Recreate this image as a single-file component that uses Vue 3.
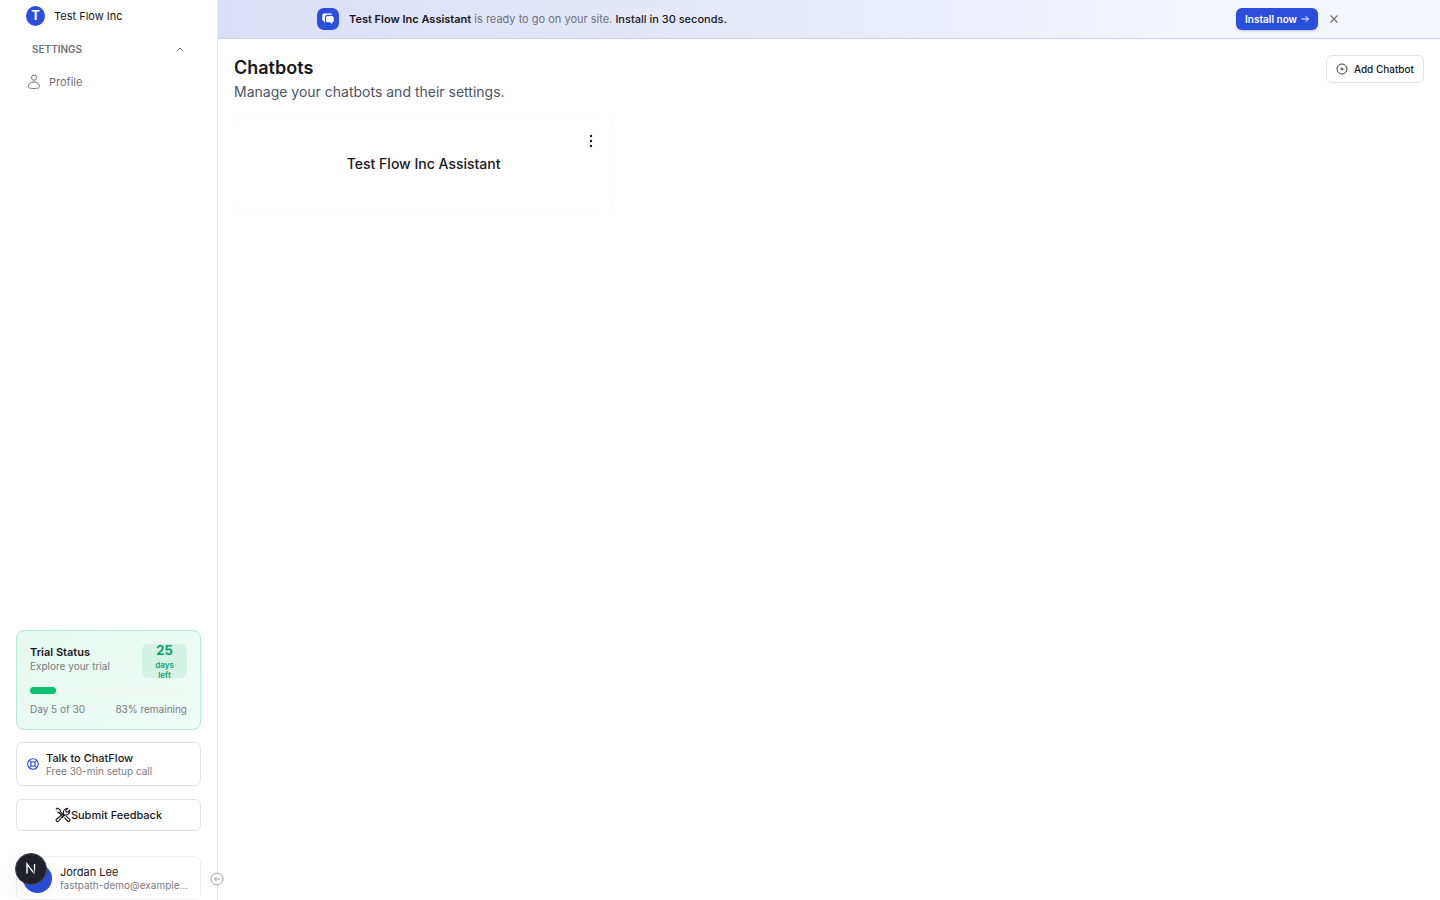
<template>
  <div class="layout">
    <aside class="sidebar">
      <a class="org" href="#">
        <span class="org-logo">T</span>
        <span>Test Flow Inc</span>
      </a>

      <button class="section-toggle" type="button" :aria-expanded="settingsOpen" @click="settingsOpen = !settingsOpen">
        <span>SETTINGS</span>
        <svg :class="{ closed: !settingsOpen }" width="8" height="8" viewBox="0 0 8 8" fill="none" stroke="currentColor">
          <path d="M1 6.300 4 3l3 3.300" />
        </svg>
      </button>

      <nav v-if="settingsOpen" class="nav">
        <a class="nav-link" href="#profile">
          <svg width="14" height="16" viewBox="0 0 14 16" fill="none" stroke="currentColor">
            <circle cx="7" cy="3.7" r="2.6" />
            <path d="M7 8c-3.2 0-5.5 2-5.5 4.4C1.500 13.900 2.900 14.500 7 14.500s5.500-.6 5.500-2.100C12.500 10 10.200 8 7 8z" />
          </svg>
          <span>Profile</span>
        </a>
      </nav>

      <div class="sidebar-bottom">
        <section class="trial">
          <div class="trial-head">
            <div>
              <div class="trial-title">Trial Status</div>
              <div class="muted">Explore your trial</div>
            </div>
            <div class="days">
              <strong>{{ daysLeft }}</strong>
              <span>days left</span>
            </div>
          </div>
          <div class="track">
            <div class="bar" :style="{ width: `${(trial.day / trial.total) * 100}%` }"></div>
          </div>
          <div class="trial-foot muted">
            <span>Day {{ trial.day }} of {{ trial.total }}</span>
            <span>{{ remaining }}% remaining</span>
          </div>
        </section>

        <a class="talk" href="#call">
          <svg width="12" height="12" viewBox="0 0 12 12" fill="none" stroke="currentColor" stroke-width="1.100">
            <circle cx="6" cy="6" r="5.300" />
            <circle cx="6" cy="6" r="2.200" />
            <path d="m2.300 2.300 2.100 2.100M9.700 2.300 7.600 4.400M2.300 9.700l2.100-2.100M9.700 9.700 7.600 7.600" />
          </svg>
          <span class="lines">
            <span class="talk-title">Talk to ChatFlow</span>
            <span class="muted">Free 30-min setup call</span>
          </span>
        </a>

        <button class="feedback" type="button">
          <svg width="16" height="16" viewBox="0 0 16 16" fill="none" stroke="currentColor" stroke-width="1.100" stroke-linejoin="round" stroke-linecap="round">
            <path d="M1.200 2.200 2.300 1.100l2.700 1.600.4 1.900 2.200 2.200M6.400 7.800 4.300 5.700l-1.600-.6z" />
            <path d="m9.700 10.800 3 3.200c.5.500 1.300.5 1.800 0s.5-1.300 0-1.800l-3.300-3.100" />
            <path d="M9 7.400 3.700 14c-.6.700-1.600.8-2.200.2s-.5-1.600.2-2.200L8.500 6.300C8 3.500 9.600 1.300 12.800 1.300l-2.100 2.100c.1 1 .9 1.800 1.900 1.900l2.100-2.100c.2 3-1.700 5.200-4.400 4.800C9.800 8 9.300 8.200 9 8.600L7.300 10.700" />
          </svg>
          <span>Submit Feedback</span>
        </button>

        <button class="user" type="button">
          <span class="avatar">J</span>
          <span class="lines user-lines">
            <span class="user-name">Jordan Lee</span>
            <span class="muted ellipsis">fastpath-demo@example.com</span>
          </span>
        </button>
      </div>

      <button class="collapse" type="button" aria-label="Collapse sidebar">
        <svg width="14" height="14" viewBox="0 0 14 14" fill="none" stroke="currentColor">
          <circle cx="7" cy="7" r="6" />
          <path d="M10 7H4.500M6.500 5l-2 2 2 2" />
        </svg>
      </button>
    </aside>

    <div class="content">
      <div v-if="bannerOpen" class="banner">
        <div class="banner-inner">
          <span class="banner-icon">
            <svg width="14" height="14" viewBox="0 0 14 14" fill="currentColor">
              <path d="M3 1.500h6.500c.9 0 1.500.5 1.700 1.200H6.800C5 2.700 4 3.900 4 5.500v3c0 .4.1.7.2 1L3 11V9.200C2 9 1.300 8.400 1.300 7.300V3.200c0-1 .7-1.700 1.700-1.700z" />
              <path d="M6.800 3.900h4c1.100 0 1.900.8 1.900 1.900v2.700c0 1-.6 1.600-1.500 1.700v2l-2-1.900H6.800c-1.100 0-1.900-.8-1.900-1.900V5.800c0-1.100.8-1.900 1.900-1.900z" />
            </svg>
          </span>
          <p class="banner-text">
            <strong>Test Flow Inc Assistant</strong> is ready to go on your site. <em>Install in 30 seconds.</em>
          </p>
          <button class="install" type="button">
            <span>Install now</span>
            <svg width="8" height="8" viewBox="0 0 8 8" fill="none" stroke="currentColor">
              <path d="M.5 4h7M4.700 1.200 7.500 4 4.700 6.800" />
            </svg>
          </button>
          <button class="dismiss" type="button" aria-label="Dismiss" @click="bannerOpen = false">
            <svg width="10" height="10" viewBox="0 0 10 10" fill="none" stroke="currentColor" stroke-width="1.200">
              <path d="m1.500 1.500 7 7M8.500 1.500l-7 7" />
            </svg>
          </button>
        </div>
      </div>

      <main class="page">
        <header class="page-head">
          <div>
            <h1>Chatbots</h1>
            <p>Manage your chatbots and their settings.</p>
          </div>
          <button class="add" type="button">
            <svg width="12" height="12" viewBox="0 0 12 12" fill="none" stroke="currentColor">
              <circle cx="6" cy="6" r="5" />
              <path d="M6 4.400v3.200M4.400 6h3.200" />
            </svg>
            <span>Add Chatbot</span>
          </button>
        </header>

        <div class="grid">
          <article v-for="bot in chatbots" :key="bot" class="card">
            <h2>{{ bot }}</h2>
            <button class="menu" type="button" aria-label="Chatbot options">
              <svg width="4" height="14" viewBox="0 0 4 14" fill="currentColor">
                <circle cx="2" cy="2" r="1.200" />
                <circle cx="2" cy="7" r="1.200" />
                <circle cx="2" cy="12" r="1.200" />
              </svg>
            </button>
          </article>
        </div>
      </main>
    </div>

    <button class="dev-badge" type="button" aria-label="Developer tools">
      <svg width="30" height="30" viewBox="0 0 30 30" fill="none">
        <defs>
          <linearGradient id="stem" x1="0" y1="10" x2="0" y2="20" gradientUnits="userSpaceOnUse">
            <stop offset="0.4" stop-color="#fff" />
            <stop offset="1" stop-color="#fff" stop-opacity="0.1" />
          </linearGradient>
          <linearGradient id="slant" x1="15" y1="15" x2="19" y2="20" gradientUnits="userSpaceOnUse">
            <stop offset="0.3" stop-color="#fff" />
            <stop offset="1" stop-color="#fff" stop-opacity="0.1" />
          </linearGradient>
        </defs>
        <path d="M11 19.500V10l8 10.500" stroke="url(#slant)" stroke-width="1.400" />
        <path d="M18.500 10v9" stroke="url(#stem)" stroke-width="1.300" />
      </svg>
    </button>
  </div>
</template>

<script setup>
import { computed, reactive, ref } from 'vue'

const settingsOpen = ref(true)
const bannerOpen = ref(true)
const trial = reactive({ day: 5, total: 30 })
const chatbots = ['Test Flow Inc Assistant']

const daysLeft = computed(() => trial.total - trial.day)
const remaining = computed(() => Math.round((daysLeft.value / trial.total) * 100))
</script>

<style>
body {
  margin: 0;
  background: #fff;
}
</style>

<style scoped>
.layout {
  display: flex;
  min-height: 100vh;
  font-family: Inter, 'Liberation Sans', sans-serif;
  font-size: 11px;
  line-height: 16px;
  color: #18181b;
}

.layout *,
.layout {
  box-sizing: border-box;
}

button {
  font: inherit;
  color: inherit;
  cursor: pointer;
}

a {
  color: inherit;
  text-decoration: none;
}

svg {
  display: block;
  flex: none;
}

.sidebar {
  position: sticky;
  top: 0;
  display: flex;
  flex-direction: column;
  flex: none;
  width: 218px;
  height: 100vh;
  border-right: 1px solid #e4e4e7;
}

.org {
  display: flex;
  align-items: center;
  gap: 9px;
  height: 32px;
  padding-left: 26px;
}

.org-logo {
  width: 19px;
  height: 20px;
  border-radius: 50%;
  background: #2b4edb;
  color: #fff;
  font-size: 13px;
  font-weight: 700;
  line-height: 19px;
  text-align: center;
}

.section-toggle {
  display: flex;
  align-items: center;
  justify-content: space-between;
  height: 34px;
  padding: 0 33px 0 32px;
  border: 0;
  background: none;
  color: #71717a;
  font-size: 10px;
  font-weight: 600;
}

.section-toggle .closed {
  transform: rotate(180deg);
}

.nav-link {
  display: flex;
  align-items: center;
  gap: 8px;
  height: 32px;
  padding-left: 27px;
  color: #71717a;
}

.sidebar-bottom {
  display: flex;
  flex-direction: column;
  margin-top: auto;
  padding: 0 16px;
}

.muted {
  color: #7c7c80;
  font-size: 10px;
  line-height: 12px;
}

.trial {
  height: 100px;
  padding: 13px;
  border: 1px solid #b5ecd6;
  border-radius: 8px;
  background: linear-gradient(135deg, #e4f9f1, #f0fbf6);
}

.trial-head {
  display: flex;
  justify-content: space-between;
}

.trial-title {
  font-weight: 600;
}

.days {
  display: flex;
  flex-direction: column;
  align-items: center;
  gap: 3px;
  width: 45px;
  height: 34px;
  border-radius: 6px;
  background: #d3f3e7;
  color: #0d9f6e;
  text-align: center;
}

.days strong {
  font-size: 13px;
  line-height: 13px;
}

.days span {
  width: 24px;
  font-size: 8px;
  font-weight: 600;
  line-height: 10px;
}

.track {
  height: 7px;
  margin-top: 9px;
  border-radius: 4px;
  background: #eff7f3;
}

.bar {
  height: 100%;
  border-radius: 4px;
  background: #06c270;
}

.trial-foot {
  display: flex;
  justify-content: space-between;
  margin-top: 9px;
}

.talk,
.feedback,
.user {
  display: flex;
  align-items: center;
  border: 1px solid #e4e4e7;
  border-radius: 6px;
  background: #fff;
}

.talk {
  gap: 7px;
  height: 44px;
  margin-top: 12px;
  padding: 0 10px;
}

.talk svg {
  color: #2b4edb;
}

.lines {
  display: flex;
  flex-direction: column;
  text-align: left;
}

.talk-title {
  font-weight: 500;
  line-height: 14px;
}

.feedback {
  justify-content: center;
  height: 32px;
  margin-top: 13px;
  padding: 0;
  font-weight: 500;
}

.user {
  gap: 8px;
  height: 44px;
  margin-top: 25px;
  padding: 0 10px 0 6px;
  border-color: #f1f1f3;
}

.avatar {
  flex: none;
  width: 29px;
  height: 29px;
  border-radius: 50%;
  background: #2b4edb;
  color: #fff;
  line-height: 29px;
}

.user-lines {
  min-width: 0;
}

.user-name {
  line-height: 14px;
}

.ellipsis {
  overflow: hidden;
  text-overflow: ellipsis;
  white-space: nowrap;
}

/* sits on the sidebar border */
.collapse {
  position: absolute;
  right: -7px;
  bottom: 14px;
  padding: 0;
  border: 0;
  border-radius: 50%;
  background: #fff;
  color: #a1a1aa;
}

.content {
  flex: 1;
  min-width: 0;
}

.banner {
  border-bottom: 1px solid #c9d2f6;
  background: linear-gradient(90deg, #dadff7, #e8ebfa 50%, #f3f6fe 80%, #f4f6fe);
}

.banner-inner {
  display: flex;
  align-items: center;
  max-width: 1024px;
  height: 38px;
  margin: 0 auto;
}

.banner-icon {
  display: grid;
  place-items: center;
  width: 22px;
  height: 22px;
  border-radius: 7px;
  background: #2b4edb;
  color: #fff;
}

.banner-text {
  flex: 1;
  margin: 0 10px;
  color: #71717a;
}

.banner-text strong {
  color: #18181b;
  font-weight: 600;
}

.banner-text em {
  color: #18181b;
  font-style: normal;
  font-weight: 500;
}

.install {
  display: flex;
  align-items: center;
  gap: 4px;
  height: 22px;
  padding: 0 9px;
  border: 0;
  border-radius: 6px;
  background: #2b4edb;
  box-shadow: 0 1px 2px rgba(43, 78, 219, 0.3);
  color: #fff;
  font-size: 10px;
  font-weight: 600;
}

.dismiss {
  margin-left: 9px;
  padding: 6px 2px;
  border: 0;
  background: none;
  color: #71717a;
}

.page {
  padding: 16px;
}

.page-head {
  display: flex;
  align-items: flex-start;
  justify-content: space-between;
}

h1 {
  margin: 0;
  font-size: 18px;
  font-weight: 600;
  line-height: 26px;
}

.page-head p {
  margin: 0;
  color: #4b5563;
  font-size: 14px;
  line-height: 22px;
}

.add {
  display: flex;
  align-items: center;
  gap: 6px;
  height: 28px;
  padding: 0 9px;
  border: 1px solid #e4e4e7;
  border-radius: 6px;
  background: #fff;
  font-size: 10px;
  font-weight: 500;
}

.add svg {
  color: #3f3f46;
}

.grid {
  display: grid;
  grid-template-columns: repeat(3, minmax(0, 1fr));
  gap: 26px;
  margin-top: 16px;
}

.card {
  position: relative;
  display: grid;
  place-items: center;
  height: 90px;
  border-radius: 6px;
  box-shadow: 0 0 1px rgba(0, 0, 0, 0.15);
}

.card h2 {
  margin: 0;
  font-size: 14px;
  font-weight: 500;
  line-height: 20px;
}

.menu {
  position: absolute;
  top: 10px;
  right: 14px;
  padding: 5px 6px;
  border: 0;
  background: none;
}

/* floating over the page corner */
.dev-badge {
  position: fixed;
  bottom: 15px;
  left: 15px;
  padding: 0;
  border: 1px solid #47474f;
  border-radius: 50%;
  background: #20202b;
  box-shadow: 0 8px 24px rgba(0, 0, 0, 0.08);
}
</style>
